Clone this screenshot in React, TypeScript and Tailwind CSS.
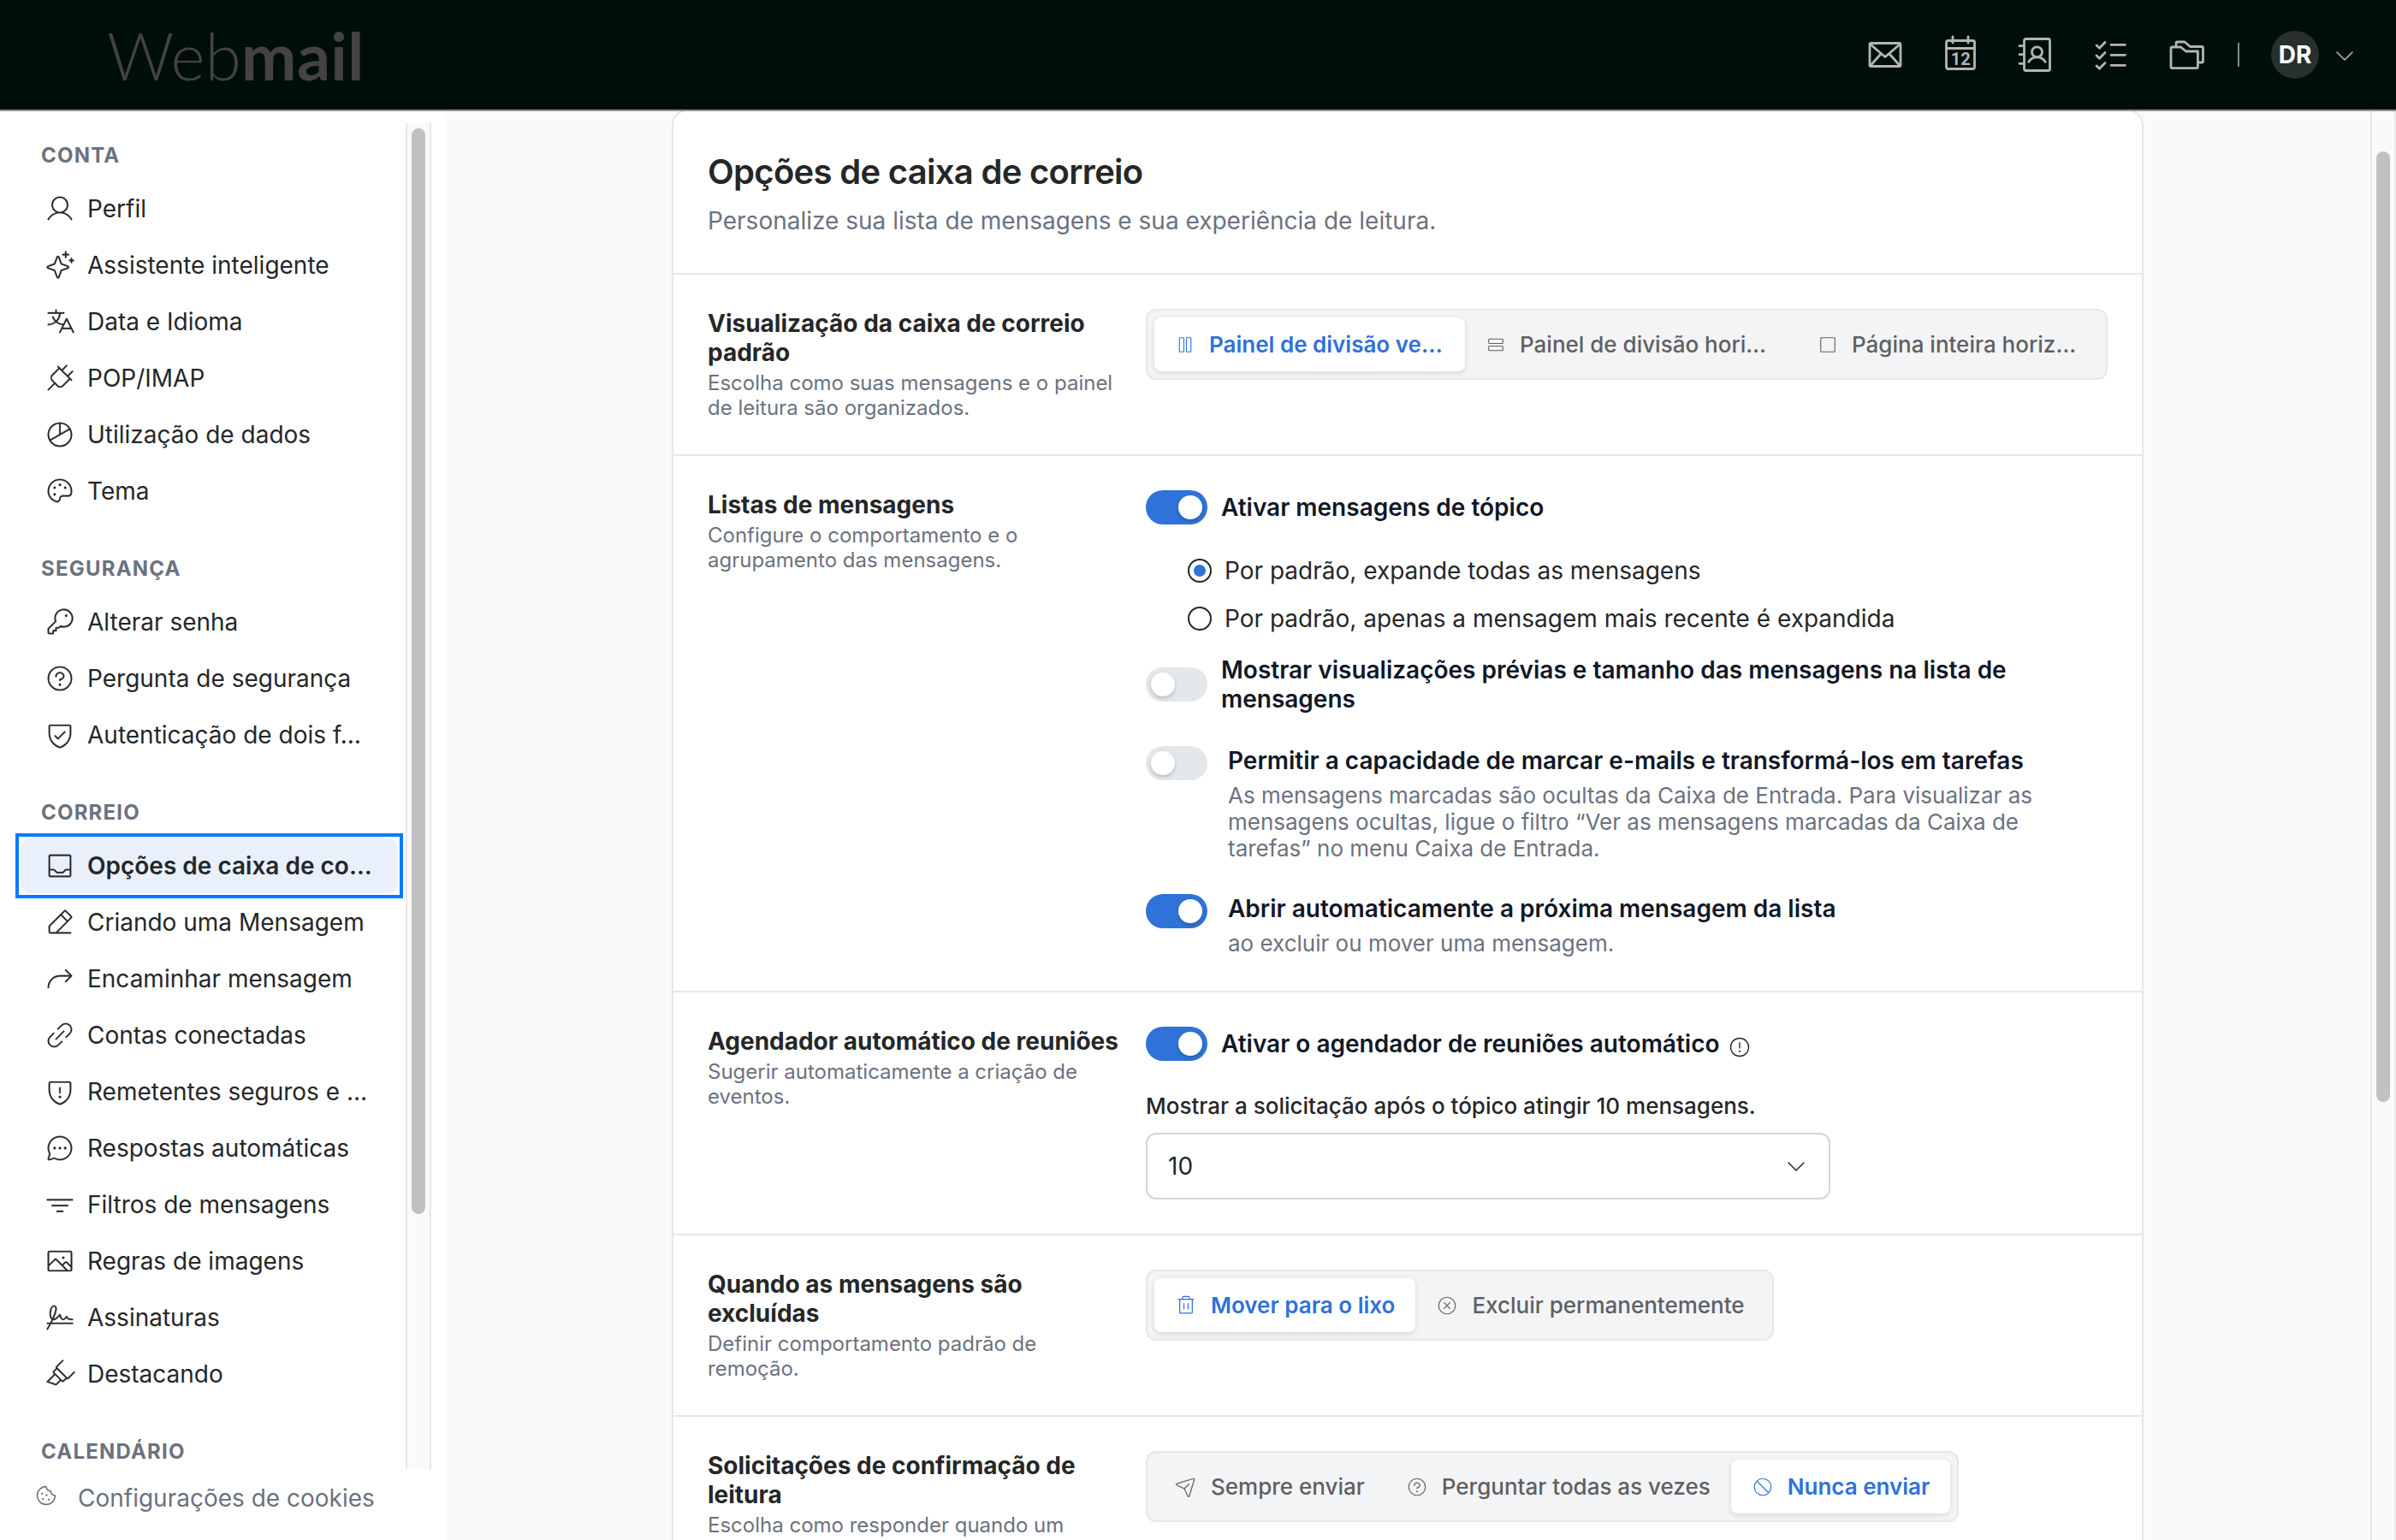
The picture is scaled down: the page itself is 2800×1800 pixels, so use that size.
import type { ReactNode } from 'react';
import type { IconType } from 'react-icons';
import {
  PiArrowBendUpRightLight,
  PiChartPieLight,
  PiChatCircleDotsLight,
  PiColumnsLight,
  PiCookieLight,
  PiFunnelSimpleLight,
  PiHighlighterLight,
  PiImageLight,
  PiKeyLight,
  PiLinkSimpleLight,
  PiPaletteLight,
  PiPaperPlaneTiltLight,
  PiPencilSimpleLineLight,
  PiPlugLight,
  PiProhibitLight,
  PiQuestionLight,
  PiRowsLight,
  PiShieldCheckLight,
  PiShieldWarningLight,
  PiSignatureLight,
  PiSparkleLight,
  PiSquareLight,
  PiTranslateLight,
  PiTrashLight,
  PiTrayLight,
  PiUserLight,
  PiWarningCircleLight,
  PiXCircleLight,
} from 'react-icons/pi';

type NavItem = { label: string; icon: IconType; active?: boolean };

const navGroups: { title: string; items: NavItem[] }[] = [
  {
    title: 'CONTA',
    items: [
      { label: 'Perfil', icon: PiUserLight },
      { label: 'Assistente inteligente', icon: PiSparkleLight },
      { label: 'Data e Idioma', icon: PiTranslateLight },
      { label: 'POP/IMAP', icon: PiPlugLight },
      { label: 'Utilização de dados', icon: PiChartPieLight },
      { label: 'Tema', icon: PiPaletteLight },
    ],
  },
  {
    title: 'SEGURANÇA',
    items: [
      { label: 'Alterar senha', icon: PiKeyLight },
      { label: 'Pergunta de segurança', icon: PiQuestionLight },
      { label: 'Autenticação de dois f…', icon: PiShieldCheckLight },
    ],
  },
  {
    title: 'CORREIO',
    items: [
      { label: 'Opções de caixa de co…', icon: PiTrayLight, active: true },
      { label: 'Criando uma Mensagem', icon: PiPencilSimpleLineLight },
      { label: 'Encaminhar mensagem', icon: PiArrowBendUpRightLight },
      { label: 'Contas conectadas', icon: PiLinkSimpleLight },
      { label: 'Remetentes seguros e …', icon: PiShieldWarningLight },
      { label: 'Respostas automáticas', icon: PiChatCircleDotsLight },
      { label: 'Filtros de mensagens', icon: PiFunnelSimpleLight },
      { label: 'Regras de imagens', icon: PiImageLight },
      { label: 'Assinaturas', icon: PiSignatureLight },
      { label: 'Destacando', icon: PiHighlighterLight },
    ],
  },
  { title: 'CALENDÁRIO', items: [] },
];

export default function App() {
  return (
    <div className="flex h-[1800px] w-[2800px] flex-col overflow-hidden bg-white font-['Inter',sans-serif] text-[28px] leading-[34px] text-[#252728]">
      <Header />
      <div className="flex min-h-0 flex-1">
        <Sidebar />
        <main className="flex min-w-0 flex-1 overflow-hidden bg-[#f9fafc] pl-[265px]">
          <MailboxOptions />
        </main>
        <div className="w-[30px] shrink-0 border-x-2 border-[#e8e8e8] bg-[#fafafa] pt-[47px]">
          <div className="mx-auto h-[1111px] w-4 rounded-full bg-[#c1c1c1]" />
        </div>
      </div>
    </div>
  );
}

function Header() {
  return (
    <header className="flex h-[130px] shrink-0 items-center border-b-2 border-[#8f8f8f] bg-[#000e0b] pl-[125px] pr-[50px]">
      <div className="mt-px font-['Lato',sans-serif] text-[77px] leading-none text-[#444243]">
        <span className="font-light">Web</span>
        <span className="font-bold tracking-[0.005em]">mail</span>
      </div>

      <nav className="ml-auto flex items-center gap-10 text-[#b1b6b5]">
        <HeaderIcon>
          <rect x="6" y="10.5" width="36" height="27" rx="1.5" />
          <path d="M7 12 24 26.5 41 12M7 36.5 19 23M41 36.5 29 23" />
        </HeaderIcon>
        <HeaderIcon>
          <rect x="7.5" y="7.5" width="33" height="33" rx="2" />
          <path d="M7.5 16.5h33M15 3v7M33 3v7" />
          <text x="24.2" y="35.8" textAnchor="middle" fill="currentColor" stroke="none" className="font-['Roboto'] text-[20px] font-bold">
            12
          </text>
        </HeaderIcon>
        <HeaderIcon>
          <rect x="10.5" y="5.5" width="30" height="37" rx="2" />
          <path d="M5 13.7h5M5 23.7h5M5 34.3h5" />
          <circle cx="25.5" cy="20.8" r="6" />
          <path d="M15.8 32.4c2-3.6 5.6-5.6 9.7-5.6s7.7 2 9.7 5.6" />
        </HeaderIcon>
        <HeaderIcon>
          <path d="m7 13 3.500 3.200L17 9.500M7 25l3.500 3.200L17 21.500M7 37l3.500 3.200L17 33.500" />
          <path d="M24 12.300h16.500M24 24.300h16.500M24 36.300h16.500" />
        </HeaderIcon>
        <HeaderIcon>
          <path d="M6 16.500v21.500q0 1.700 1.700 1.700h28q1.700 0 1.700-1.700v-18H23.500l-6-5H7.500Q6 15 6 16.500z" />
          <path d="M12 14.500v-4q0-1.500 1.500-1.500h8.500l6.500 5.500h13.500q1.500 0 1.500 1.500v15.500q0 1.500-1.500 1.500h-3.500" />
        </HeaderIcon>
      </nav>

      <div className="ml-[36px] h-[28px] w-0.5 bg-[#838988]" />
      <div className="ml-[37px] flex size-14 items-center justify-center rounded-full bg-[#27302e] text-[28px] font-bold text-white">
        DR
      </div>
      <svg viewBox="0 0 20 11" className="ml-5 mt-0.5 h-[11px] w-5" fill="none" stroke="#b1b6b5" strokeWidth="1.6" strokeLinecap="round" strokeLinejoin="round">
        <path d="m1 1 9 9 9-9" />
      </svg>
    </header>
  );
}

function HeaderIcon({ children }: { children: ReactNode }) {
  return (
    <svg viewBox="0 0 48 48" className="size-12" fill="none" stroke="currentColor" strokeWidth="2.8" strokeLinecap="round" strokeLinejoin="round">
      {children}
    </svg>
  );
}

function Sidebar() {
  return (
    <aside className="flex w-[520px] shrink-0 flex-col">
      <div className="flex h-[1587px] overflow-hidden">
        <div className="w-[474px] pl-6 pr-[9px]">
          <div className="-mt-[5px]">
            {navGroups.map((group) => (
              <div key={group.title}>
                <div className="px-6 pb-4 pt-[43px] text-[24px] font-bold leading-7 tracking-[0.05em] text-[#6b7280]">
                  {group.title}
                </div>
                {group.items.map((item) => (
                  <NavRow key={item.label} item={item} />
                ))}
              </div>
            ))}
          </div>
        </div>
        <div className="mt-3.5 w-[30px] border-x-2 border-[#e8e8e8] bg-[#fafafa] pt-1.5">
          <div className="mx-auto h-[1269px] w-4 rounded-full bg-[#c1c1c1]" />
        </div>
      </div>
      <div className="flex items-center pl-10 pt-[17px] text-[#6b7280]">
        <PiCookieLight className="-mt-[7px] size-7 stroke-2" />
        <span className="ml-[23px]">Configurações de cookies</span>
      </div>
    </aside>
  );
}

function NavRow({ item }: { item: NavItem }) {
  const Icon = item.icon;
  return (
    <div className={item.active ? 'mb-0.5 outline-4 outline-offset-2 outline-[#007aff]' : 'mb-0.5'}>
      <a className={`flex h-16 items-center rounded-xl pl-7 ${item.active ? 'bg-[#e9f0fb] font-semibold' : ''}`}>
        <Icon className="size-9 stroke-2" />
        <span className="ml-3.5 whitespace-nowrap">{item.label}</span>
      </a>
    </div>
  );
}

function MailboxOptions() {
  return (
    <div className="-mt-0.5 h-[1800px] w-[1720px] shrink-0 rounded-t-[18px] border-2 border-[#e5e7eb] bg-white">
      <div className="h-[189px] px-10 pt-[46px]">
        <h1 className="text-[40px] font-semibold leading-[50px] tracking-[-0.0175em]">Opções de caixa de correio</h1>
        <p className="mt-[15px] text-[#6b7280]">
          Personalize sua lista de mensagens e sua experiência de leitura.
        </p>
      </div>

      <Section
        title={'Visualização da caixa de correio\npadrão'}
        description={'Escolha como suas mensagens e o painel\nde leitura são organizados.'}
        className="h-[212px]"
      >
        <div className="flex h-[83px] rounded-xl border-2 border-[#e5e7eb] bg-[#f3f4f6] p-2">
          <Segment icon={PiColumnsLight} label="Painel de divisão ve…" iconClass="size-6" className="w-[363px]" active />
          <Segment icon={PiRowsLight} label="Painel de divisão hori…" iconClass="size-6" className="w-[388px]" />
          <Segment icon={PiSquareLight} label="Página inteira horiz…" iconClass="size-6" className="flex-1" />
        </div>
      </Section>

      <Section
        title="Listas de mensagens"
        description={'Configure o comportamento e o\nagrupamento das mensagens.'}
        className="h-[627px]"
      >
        <ToggleRow on label="Ativar mensagens de tópico" />
        <div className="mt-[37px] space-y-[22px] pl-[49px]">
          <Radio label="Por padrão, expande todas as mensagens" checked />
          <Radio label="Por padrão, apenas a mensagem mais recente é expandida" />
        </div>
        <div className="mt-[26px]">
          <ToggleRow label={'Mostrar visualizações prévias e tamanho das mensagens na lista de\nmensagens'} />
        </div>
        <div className="mt-[38px] flex">
          <Toggle />
          <div className="ml-6 whitespace-pre">
            <div className="font-semibold text-[#111827]">
              Permitir a capacidade de marcar e-mails e transformá-los em tarefas
            </div>
            <div className="mt-2 text-[26px] leading-[31px] text-[#6b7280]">
              {'As mensagens marcadas são ocultas da Caixa de Entrada. Para visualizar as\nmensagens ocultas, ligue o filtro “Ver as mensagens marcadas da Caixa de\ntarefas” no menu Caixa de Entrada.'}
            </div>
          </div>
        </div>
        <div className="mt-[38px] flex">
          <Toggle on />
          <div className="ml-6">
            <div className="font-semibold text-[#111827]">Abrir automaticamente a próxima mensagem da lista</div>
            <div className="mt-2 text-[26px] leading-[31px] text-[#6b7280]">ao excluir ou mover uma mensagem.</div>
          </div>
        </div>
      </Section>

      <Section
        title="Agendador automático de reuniões"
        description={'Sugerir automaticamente a criação de\neventos.'}
        className="h-[284px]"
      >
        <div className="flex items-center">
          <ToggleRow on label="Ativar o agendador de reuniões automático" />
          <PiWarningCircleLight className="ml-[9px] mt-[7px] size-7" />
        </div>
        <div className="mt-9 text-[26px] font-medium">Mostrar a solicitação após o tópico atingir 10 mensagens.</div>
        <div className="mt-3.5 flex h-[78px] w-[800px] items-center justify-between rounded-xl border-2 border-[#d1d5db] bg-white pl-6 pr-7">
          <span>10</span>
          <svg viewBox="0 0 20 11" className="h-[11px] w-5" fill="none" stroke="currentColor" strokeWidth="1.5" strokeLinecap="round" strokeLinejoin="round">
            <path d="m1 1 9 9 9-9" />
          </svg>
        </div>
      </Section>

      <Section
        title={'Quando as mensagens são\nexcluídas'}
        description={'Definir comportamento padrão de\nremoção.'}
        className="h-[212px]"
      >
        <div className="inline-flex h-[83px] rounded-xl border-2 border-[#e5e7eb] bg-[#f3f4f6] p-2">
          <Segment icon={PiTrashLight} label="Mover para o lixo" active />
          <Segment icon={PiXCircleLight} label="Excluir permanentemente" />
        </div>
      </Section>

      <Section
        title={'Solicitações de confirmação de\nleitura'}
        description={'Escolha como responder quando um'}
        className="h-[212px]"
      >
        <div className="inline-flex h-[83px] rounded-xl border-2 border-[#e5e7eb] bg-[#f3f4f6] p-2">
          <Segment icon={PiPaperPlaneTiltLight} label="Sempre enviar" />
          <Segment icon={PiQuestionLight} label="Perguntar todas as vezes" />
          <Segment icon={PiProhibitLight} label="Nunca enviar" active />
        </div>
      </Section>
    </div>
  );
}

function Section({
  title,
  description,
  className,
  children,
}: {
  title: string;
  description: string;
  className: string;
  children: ReactNode;
}) {
  return (
    <section className={`flex border-t-2 border-[#e5e7eb] px-10 pt-10 ${className}`}>
      <div className="w-[512px] shrink-0 whitespace-pre">
        <h2 className="font-bold">{title}</h2>
        <p className="mt-1 text-[24px] leading-[29px] text-[#6b7280]">{description}</p>
      </div>
      <div className="min-w-0 flex-1">{children}</div>
    </section>
  );
}

function Segment({
  icon: Icon,
  label,
  active = false,
  iconClass = 'size-[26px]',
  className = '',
}: {
  icon: IconType;
  label: string;
  active?: boolean;
  iconClass?: string;
  className?: string;
}) {
  const state = active
    ? 'rounded-lg bg-white font-semibold text-[#2e71d9] shadow-[0_2px_6px_rgba(0,0,0,0.12)]'
    : 'font-medium text-[#5f6062]';
  return (
    <button type="button" className={`flex items-center gap-4 whitespace-nowrap px-6 pt-px text-[26px] ${state} ${className}`}>
      <Icon className={`shrink-0 ${iconClass}`} />
      {label}
    </button>
  );
}

function Toggle({ on = false }: { on?: boolean }) {
  return (
    <span className={`flex h-10 w-[72px] shrink-0 items-center rounded-full px-1.5 ${on ? 'justify-end bg-[#2f73da]' : 'bg-[#e4e7eb]'}`}>
      <span className="size-7 rounded-full bg-white shadow-[0_2px_4px_rgba(0,0,0,0.2)]" />
    </span>
  );
}

function ToggleRow({ label, on = false }: { label: string; on?: boolean }) {
  return (
    <div className="flex items-center">
      <Toggle on={on} />
      <span className="ml-4 whitespace-pre font-semibold text-[#111827]">{label}</span>
    </div>
  );
}

function Radio({ label, checked = false }: { label: string; checked?: boolean }) {
  return (
    <div className="flex items-center">
      <span className="flex size-7 items-center justify-center rounded-full border-2 border-[#252728]">
        {checked && <span className="size-3.5 rounded-full bg-[#2f73da]" />}
      </span>
      <span className="ml-[15px]">{label}</span>
    </div>
  );
}
